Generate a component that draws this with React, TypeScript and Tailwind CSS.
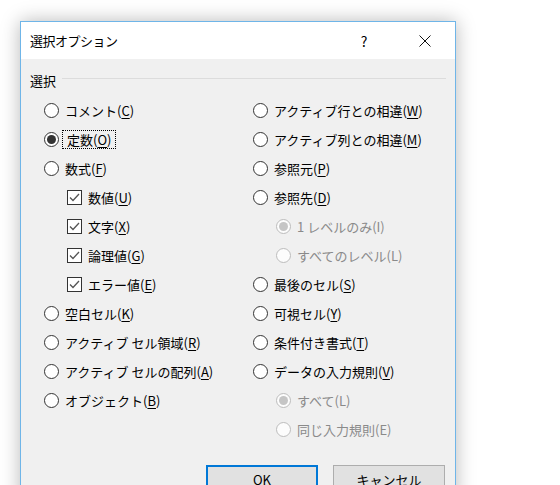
import React from 'react';

type Opt = {
    label: string;
    key?: string;
    kind: 'radio' | 'check' | 'sub' | 'empty';
    checked?: boolean;
    disabled?: boolean;
    focus?: boolean;
};

const leftCol: Opt[] = [
    { label: 'コメント', key: 'C', kind: 'radio' },
    { label: '定数', key: 'O', kind: 'radio', checked: true, focus: true },
    { label: '数式', key: 'F', kind: 'radio' },
    { label: '数値', key: 'U', kind: 'check', checked: true },
    { label: '文字', key: 'X', kind: 'check', checked: true },
    { label: '論理値', key: 'G', kind: 'check', checked: true },
    { label: 'エラー値', key: 'E', kind: 'check', checked: true },
    { label: '空白セル', key: 'K', kind: 'radio' },
    { label: 'アクティブ セル領域', key: 'R', kind: 'radio' },
    { label: 'アクティブ セルの配列', key: 'A', kind: 'radio' },
    { label: 'オブジェクト', key: 'B', kind: 'radio' },
    { label: '', kind: 'empty' },
];

const rightCol: Opt[] = [
    { label: 'アクティブ行との相違', key: 'W', kind: 'radio' },
    { label: 'アクティブ列との相違', key: 'M', kind: 'radio' },
    { label: '参照元', key: 'P', kind: 'radio' },
    { label: '参照先', key: 'D', kind: 'radio' },
    { label: '1 レベルのみ(I)', kind: 'sub', checked: true, disabled: true },
    { label: 'すべてのレベル(L)', kind: 'sub', disabled: true },
    { label: '最後のセル', key: 'S', kind: 'radio' },
    { label: '可視セル', key: 'Y', kind: 'radio' },
    { label: '条件付き書式', key: 'T', kind: 'radio' },
    { label: 'データの入力規則', key: 'V', kind: 'radio' },
    { label: 'すべて(L)', kind: 'sub', checked: true, disabled: true },
    { label: '同じ入力規則(E)', kind: 'sub', disabled: true },
];

const Radio: React.FC<{ checked?: boolean; disabled?: boolean }> = ({ checked, disabled }) => (
    <span
        className={`w-[15px] h-[15px] rounded-full border flex items-center justify-center flex-shrink-0 ${disabled ? 'border-[#bcbcbc] bg-[#fcfcfc]' : 'border-[#333] bg-white'}`}
    >
        {checked && (
            <span className={`w-[9px] h-[9px] rounded-full ${disabled ? 'bg-[#c5c5c5]' : 'bg-[#333]'}`} />
        )}
    </span>
);

const Check: React.FC = () => (
    <span className="w-[15px] h-[15px] border border-[#333] bg-white flex items-center justify-center flex-shrink-0">
        <svg width="11" height="9" viewBox="0 0 11 9">
            <path d="M1 4.5 L4 7.5 L10 1" fill="none" stroke="#555" strokeWidth="1.3" />
        </svg>
    </span>
);

const Label: React.FC<{ opt: Opt }> = ({ opt }) => {
    if (opt.disabled) return <span className="text-[#8a8a8a]">{opt.label}</span>;
    return (
        <span
            className={opt.focus ? 'px-[2px] outline outline-1 outline-dotted outline-black outline-offset-[2px]' : ''}
        >
            {opt.label}(<u className="underline-offset-[2px]">{opt.key}</u>)
        </span>
    );
};

const Row: React.FC<{ opt: Opt }> = ({ opt }) => {
    if (opt.kind === 'empty') return <div className="h-[29px]" />;
    const indent = opt.kind === 'radio' ? 'gap-[6px]' : 'pl-[23px] gap-[6px]';
    return (
        <div className={`h-[29px] flex items-center ${indent}`}>
            {opt.kind === 'check' ? <Check /> : <Radio checked={opt.checked} disabled={opt.disabled} />}
            <Label opt={opt} />
        </div>
    );
};

export default function App() {
    return (
        <div
            className="w-[560px] h-[485px] bg-white overflow-hidden pt-[21px] pl-[20px]"
            style={{ fontFamily: '"Noto Sans CJK JP", "Noto Sans", sans-serif' }}
        >
            <div className="w-[436px] border border-[#6fb5e8] bg-[#f0f0f0] shadow-[0_0_18px_rgba(0,0,0,0.28)] text-[13px] text-black leading-none">
                {/* Title bar */}
                <div className="h-[37px] bg-white flex items-center pl-[9px]">
                    <span className="text-[13px] tracking-[-0.5px]">選択オプション</span>
                    <span className="ml-auto w-[20px] text-center text-[14px] mr-[28px]">?</span>
                    <span className="w-[46px] flex items-center justify-center mr-[7px]">
                        <svg width="12" height="12" viewBox="0 0 12 12">
                            <path d="M0.5 0.5 L11.5 11.5 M11.5 0.5 L0.5 11.5" stroke="#111" strokeWidth="1" />
                        </svg>
                    </span>
                </div>

                {/* Body */}
                <div className="pt-[11px] pl-[9px] pr-[9px]">
                    <div className="h-[20px] flex items-center gap-[6px]">
                        <span>選択</span>
                        <span className="flex-1 h-[1px] bg-[#dcdcdc] mt-[-4px]" />
                    </div>
                    <div className="mt-[6px] grid grid-cols-[209px_1fr] pl-[14px]">
                        <div>
                            {leftCol.map((o, i) => (
                                <Row key={i} opt={o} />
                            ))}
                        </div>
                        <div>
                            {rightCol.map((o, i) => (
                                <Row key={i} opt={o} />
                            ))}
                        </div>
                    </div>

                    {/* Buttons */}
                    <div className="mt-[21px] flex justify-end gap-[15px] pr-[1px] pb-[10px]">
                        <button className="w-[112px] h-[28px] bg-[#e1e1e1] border-2 border-[#0078d7] text-[13px]">OK</button>
                        <button className="w-[112px] h-[28px] bg-[#e1e1e1] border border-[#adadad] text-[13px]">キャンセル</button>
                    </div>
                </div>
            </div>
        </div>
    );
}
